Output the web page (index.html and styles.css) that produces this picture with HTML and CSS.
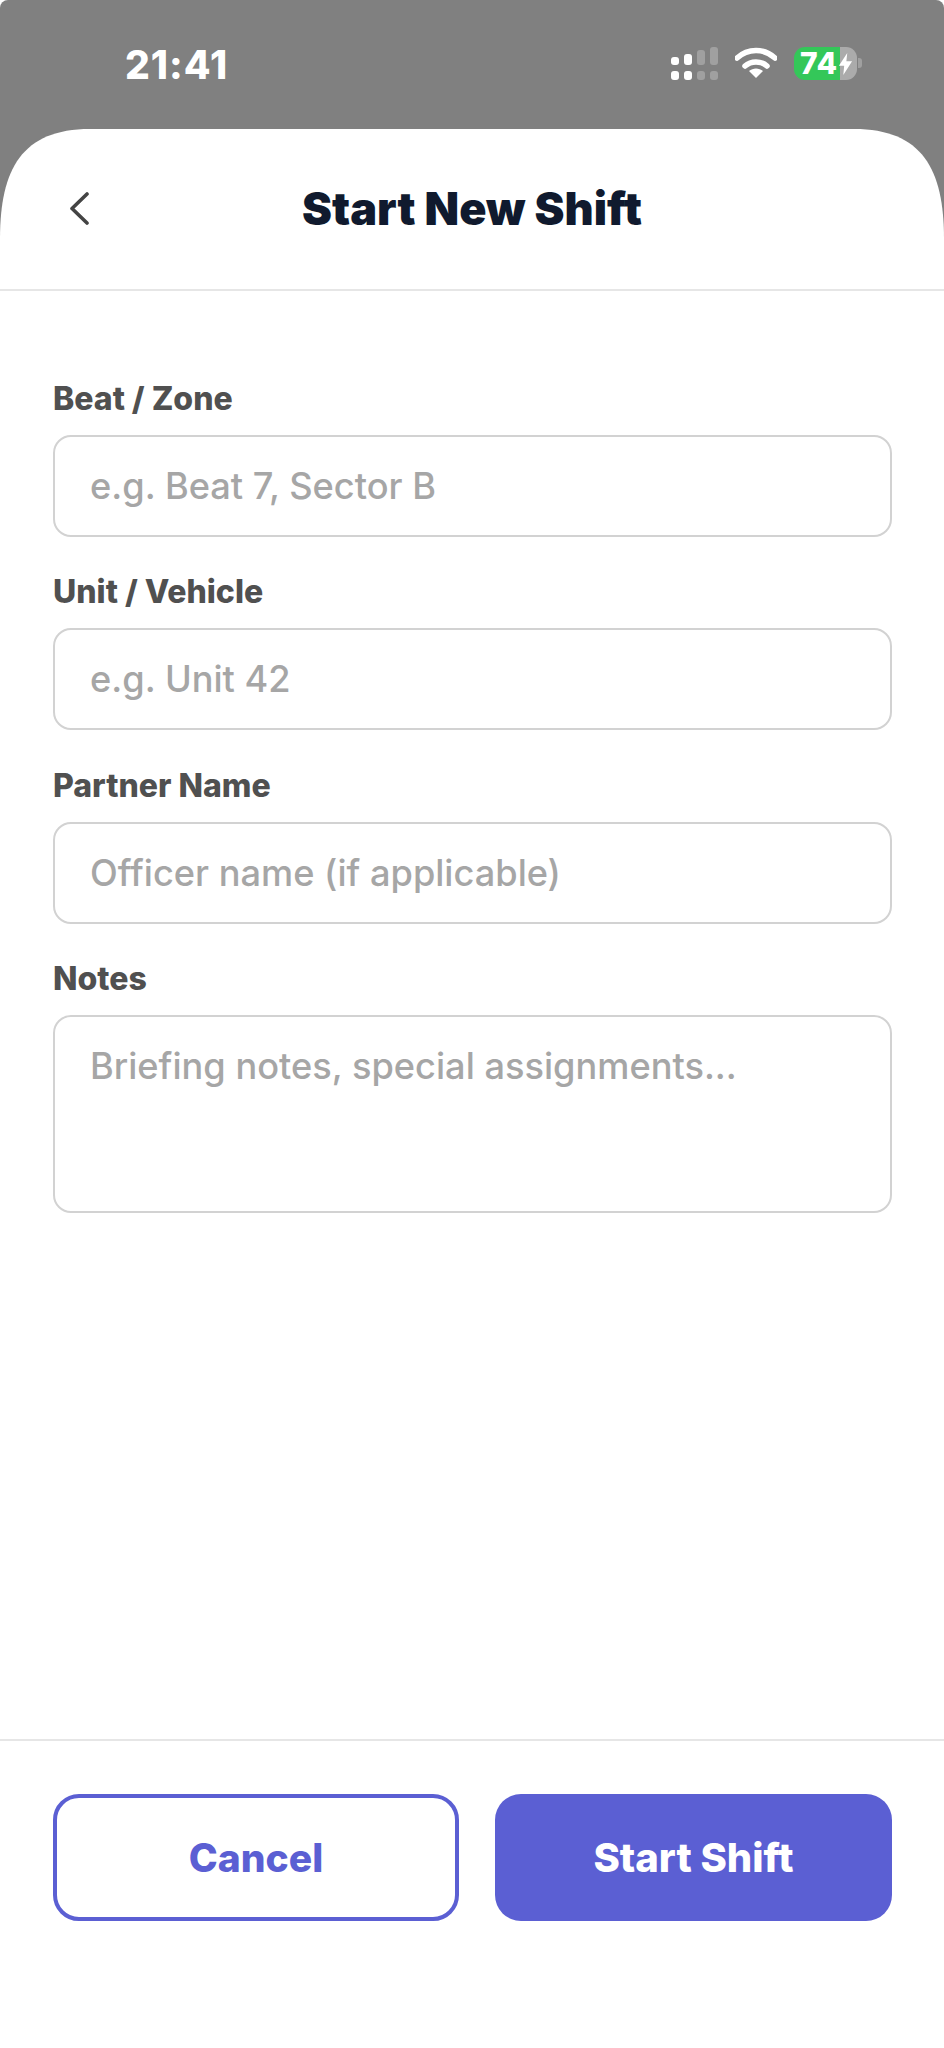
FILE: index.html
```html
<!DOCTYPE html>
<html lang="en">
<head>
  <meta charset="UTF-8" />
  <meta name="viewport" content="width=device-width, initial-scale=1" />
  <title>Start New Shift</title>
  <link rel="stylesheet" href="styles.css">
</head>
<body>
  <div class="statusbar">
    <span class="time">21:41</span>
    <div class="status-icons">
      <svg class="signal" width="47" height="33" viewBox="0 0 47 33">
        <g fill="#fff">
          <rect x="0" y="10" width="8" height="8" rx="3" />
          <rect x="0" y="24" width="8" height="9" rx="3" />
          <rect x="13" y="7" width="8" height="11" rx="3" />
          <rect x="13" y="24" width="8" height="9" rx="3" />
        </g>
        <g fill="#fff" fill-opacity="0.25">
          <rect x="26" y="3" width="8" height="15" rx="3" />
          <rect x="26" y="24" width="8" height="9" rx="3" />
          <rect x="39" y="0" width="8" height="18" rx="3" />
          <rect x="39" y="24" width="8" height="9" rx="3" />
        </g>
      </svg>
      <svg class="wifi" width="42" height="31" viewBox="0 0 42 31">
        <path d="M2 11 C13 1 29 1 40 11" fill="none" stroke="#fff" stroke-width="5.5" stroke-linecap="round" />
        <path d="M10 19 C16 13.500 26 13.500 32 19" fill="none" stroke="#fff" stroke-width="5.5" stroke-linecap="round" />
        <path d="M14 24 C18 20.500 24 20.500 28 24 L21 31 Z" fill="#fff" />
      </svg>
      <div class="battery">
        <span class="battery-level">74</span>
        <svg class="bolt" width="15" height="22" viewBox="0 0 15 25">
          <path d="M9.500 0 L0 14.500 H6 L5 25 L15 9.500 H8.500 Z" fill="#fff" />
        </svg>
        <span class="battery-nub"></span>
      </div>
    </div>
  </div>

  <div class="sheet">
    <header class="topbar">
      <button class="back" aria-label="Back">
        <svg width="20" height="33" viewBox="0 0 20 33">
          <path d="M18 2 L3 16.500 L18 31" fill="none" stroke="#444" stroke-width="3.6" stroke-linecap="round" stroke-linejoin="round" />
        </svg>
      </button>
      <h1>Start New Shift</h1>
    </header>

    <form class="form">
      <div class="field">
        <label for="beat">Beat / Zone</label>
        <input id="beat" type="text" placeholder="e.g. Beat 7, Sector B">
      </div>
      <div class="field">
        <label for="unit">Unit / Vehicle</label>
        <input id="unit" type="text" placeholder="e.g. Unit 42">
      </div>
      <div class="field">
        <label for="partner">Partner Name</label>
        <input id="partner" type="text" placeholder="Officer name (if applicable)">
      </div>
      <div class="field">
        <label for="notes">Notes</label>
        <textarea id="notes" placeholder="Briefing notes, special assignments..."></textarea>
      </div>
    </form>

    <footer class="actions">
      <button class="btn btn-cancel" type="button">Cancel</button>
      <button class="btn btn-start" type="button">Start Shift</button>
    </footer>
  </div>
</body>
</html>
```

FILE: styles.css
```css
html, body {
  margin: 0;
  padding: 0;
  height: 100%;
  background: #fff;
  overflow: hidden;
  font-family: 'Inter', 'Liberation Sans', sans-serif;
}

body {
  display: flex;
  flex-direction: column;
  height: 2048px;
}

.statusbar {
  display: flex;
  align-items: flex-start;
  justify-content: space-between;
  height: 305px;
  margin-bottom: -176px;
  padding: 42px 87px 0 125px;
  box-sizing: border-box;
  background: #808080;
  border-radius: 8px 8px 0 0;
  color: #fff;
}

.time {
  font-size: 39px;
  font-weight: 800;
  letter-spacing: 1px;
  line-height: 46px;
}

.status-icons {
  display: flex;
  align-items: flex-start;
  margin-top: 5px;
}

.wifi {
  margin: 0 17px 0 17px;
}

.battery {
  position: relative;
  display: flex;
  align-items: center;
  width: 63px;
  height: 33px;
  padding-left: 6px;
  box-sizing: border-box;
  border-radius: 11px;
  background: linear-gradient(to right, #34c759 46px, #ababab 46px);
}

.battery-level {
  width: 38px;
  flex: none;
  font-size: 30px;
  font-weight: 800;
  letter-spacing: 0.5px;
  line-height: 33px;
}

.bolt {
  flex: none;
}

.battery-nub {
  position: absolute;
  right: -5px;
  top: 11px;
  width: 4px;
  height: 10px;
  border-radius: 0 3px 3px 0;
  background: #a0a0a0;
}

.sheet {
  flex: 1;
  display: flex;
  flex-direction: column;
  background: #fff;
  clip-path: path("M0 110 C0 40 22 0 90 0 H854 C922 0 944 40 944 110 V1919 H0 Z");
}

.topbar {
  position: relative;
  display: flex;
  align-items: center;
  justify-content: center;
  height: 158px;
  padding-bottom: 2px;
  border-bottom: 2px solid #e6e6e6;
}

.topbar h1 {
  margin: 0;
  font-size: 45px;
  font-weight: 900;
  color: #101a2e;
}

.back {
  position: absolute;
  left: 69px;
  top: 63px;
  padding: 0;
  border: 0;
  background: none;
  line-height: 0;
}

.form {
  flex: 1;
  display: flex;
  flex-direction: column;
  gap: 36.300px;
  padding: 89px 52px 0 53px;
}

.field {
  display: flex;
  flex-direction: column;
}

.field label {
  margin-bottom: 17px;
  font-size: 32px;
  font-weight: 800;
  line-height: 38px;
  color: #505050;
}

.field input,
.field textarea {
  display: block;
  width: 100%;
  height: 102px;
  padding: 0 35px;
  box-sizing: border-box;
  border: 2.500px solid #d2d2d2;
  border-radius: 18px;
  background: #fff;
  font-family: inherit;
  font-size: 36.200px;
  font-weight: 500;
  color: #333;
  outline: none;
}

.field textarea {
  height: 198px;
  padding-top: 27px;
  resize: none;
}

.field input::placeholder,
.field textarea::placeholder {
  color: #a6a6a6;
  opacity: 1;
}

.actions {
  display: flex;
  gap: 36px;
  height: 309px;
  padding: 53px 52px 0 53px;
  box-sizing: border-box;
  border-top: 2px solid #e6e6e6;
}

.btn {
  height: 127px;
  border-radius: 26px;
  font-family: inherit;
  font-size: 39px;
  font-weight: 800;
}

.btn-cancel {
  flex: 0 0 406px;
  border: 4px solid #5b5fd3;
  background: #fff;
  color: #5b5fd3;
}

.btn-start {
  flex: 1;
  border: 0;
  background: #5b5fd3;
  color: #fff;
  font-size: 40px;
}
```
